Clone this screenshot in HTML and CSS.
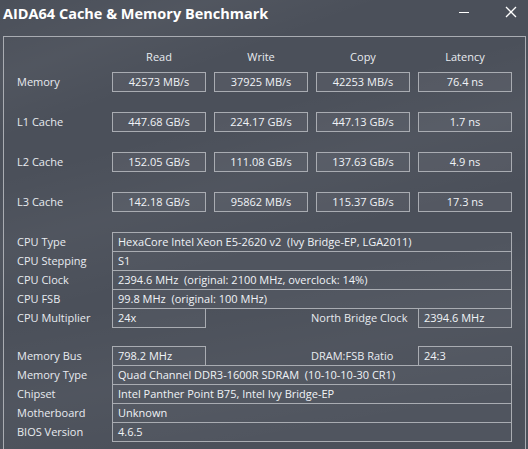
FILE: index.html
```html
<!DOCTYPE html>
<html>
<head>
<meta charset="utf-8">
<link rel="stylesheet" href="styles.css">
</head>
<body>
<div class="window">
  <div class="titlebar">
    <span class="title">AIDA64 Cache &amp; Memory Benchmark</span>
    <div class="controls">
      <svg class="min" width="12" height="12" viewBox="0 0 12 12"><line x1="1" y1="6.5" x2="11" y2="6.5" stroke="#ffffff" stroke-width="1"/></svg>
      <svg class="close" width="12" height="12" viewBox="0 0 12 12"><path d="M1 1 L11 11 M11 1 L1 11" stroke="#ffffff" stroke-width="1.3" fill="none"/></svg>
    </div>
  </div>
  <div class="panel">
    <div class="bench-head">
      <span></span><span>Read</span><span>Write</span><span>Copy</span><span>Latency</span>
    </div>
    <div class="bench">
      <span class="lbl">Memory</span><span class="cell">42573 MB/s</span><span class="cell">37925 MB/s</span><span class="cell">42253 MB/s</span><span class="cell">76.4 ns</span>
      <span class="lbl">L1 Cache</span><span class="cell">447.68 GB/s</span><span class="cell">224.17 GB/s</span><span class="cell">447.13 GB/s</span><span class="cell">1.7 ns</span>
      <span class="lbl">L2 Cache</span><span class="cell">152.05 GB/s</span><span class="cell">111.08 GB/s</span><span class="cell">137.63 GB/s</span><span class="cell">4.9 ns</span>
      <span class="lbl">L3 Cache</span><span class="cell">142.18 GB/s</span><span class="cell">95862 MB/s</span><span class="cell">115.37 GB/s</span><span class="cell">17.3 ns</span>
    </div>

    <div class="info cpu">
      <div class="row"><span class="lbl">CPU Type</span><span class="val wide">HexaCore Intel Xeon E5-2620 v2  (Ivy Bridge-EP, LGA2011)</span></div>
      <div class="row"><span class="lbl">CPU Stepping</span><span class="val wide">S1</span></div>
      <div class="row"><span class="lbl">CPU Clock</span><span class="val wide">2394.6 MHz  (original: 2100 MHz, overclock: 14%)</span></div>
      <div class="row"><span class="lbl">CPU FSB</span><span class="val wide">99.8 MHz  (original: 100 MHz)</span></div>
      <div class="row"><span class="lbl">CPU Multiplier</span><span class="val short">24x</span><span class="mid">North Bridge Clock</span><span class="val short">2394.6 MHz</span></div>
    </div>

    <div class="info mem">
      <div class="row"><span class="lbl">Memory Bus</span><span class="val short">798.2 MHz</span><span class="mid">DRAM:FSB Ratio</span><span class="val short">24:3</span></div>
      <div class="row"><span class="lbl">Memory Type</span><span class="val wide">Quad Channel DDR3-1600R SDRAM  (10-10-10-30 CR1)</span></div>
      <div class="row"><span class="lbl">Chipset</span><span class="val wide">Intel Panther Point B75, Intel Ivy Bridge-EP</span></div>
      <div class="row"><span class="lbl">Motherboard</span><span class="val wide">Unknown</span></div>
      <div class="row"><span class="lbl">BIOS Version</span><span class="val wide">4.6.5</span></div>
    </div>
  </div>
</div>
</body>
</html>
```
FILE: styles.css
```css
html, body {
  margin: 0;
  padding: 0;
}
body {
  width: 528px;
  height: 449px;
  overflow: hidden;
  font-family: "Open Sans", "Noto Sans", sans-serif;
  font-size: 11px;
  color: #e8ebf0;
}
.window {
  width: 528px;
  height: 449px;
  overflow: hidden;
  background-color: #4b505a;
  background-image:
    linear-gradient(160deg, rgba(255,255,255,0) 0%, rgba(255,255,255,0.035) 12%, rgba(255,255,255,0) 22%),
    linear-gradient(165deg, rgba(255,255,255,0) 30%, rgba(255,255,255,0.03) 42%, rgba(255,255,255,0) 55%),
    linear-gradient(170deg, rgba(255,255,255,0) 60%, rgba(255,255,255,0.03) 75%, rgba(255,255,255,0) 90%);
}
.titlebar {
  height: 36px;
  display: flex;
  align-items: flex-start;
  justify-content: space-between;
}
.title {
  font-family: "Open Sans", "Noto Sans", sans-serif;
  font-weight: 700;
  font-size: 14.5px;
  color: #ffffff;
  margin-left: 3px;
  margin-top: 4px;
  line-height: 20px;
}
.controls {
  display: flex;
  align-items: center;
  margin-top: 6px;
  margin-right: 11px;
}
.min {
  display: block;
  margin-right: 35px;
}
.close {
  display: block;
}
.panel {
  margin-left: 3px;
  width: 523px;
  height: 440px;
  border: 1px solid #a9acb2;
  padding-left: 13px;
  box-sizing: border-box;
}
.bench-head, .bench {
  display: grid;
  grid-template-columns: 87px repeat(4, 94px);
  column-gap: 8px;
}
.bench-head {
  margin-top: 10px;
  height: 20px;
  line-height: 20px;
  margin-bottom: 5px;
  text-align: center;
  color: #e8ebf0;
}
.bench {
  grid-auto-rows: 20px;
  row-gap: 20px;
}
.lbl {
  line-height: 20px;
  white-space: pre;
  color: #e8ebf0;
}
.cell {
  box-sizing: border-box;
  height: 20px;
  border: 1px solid #a9acb2;
  background: rgba(255,255,255,0.05);
  text-align: center;
  line-height: 18px;
  color: #f0f3f7;
  white-space: pre;
}
.info {
  display: flex;
  flex-direction: column;
}
.cpu {
  margin-top: 20px;
}
.mem {
  margin-top: 18px;
}
.row {
  display: flex;
  height: 20px;
}
.row + .row {
  margin-top: -1px;
}
.row .lbl {
  width: 95px;
  flex: none;
}
.val {
  box-sizing: border-box;
  height: 20px;
  border: 1px solid #a9acb2;
  background: rgba(255,255,255,0.03);
  line-height: 18px;
  padding-left: 5px;
  white-space: pre;
  color: #f0f3f7;
  flex: none;
}
.wide {
  width: 400px;
}
.short {
  width: 94px;
}
.mid {
  width: 212px;
  flex: none;
  box-sizing: border-box;
  padding-left: 105px;
  line-height: 20px;
  white-space: pre;
  color: #e8ebf0;
}
```
